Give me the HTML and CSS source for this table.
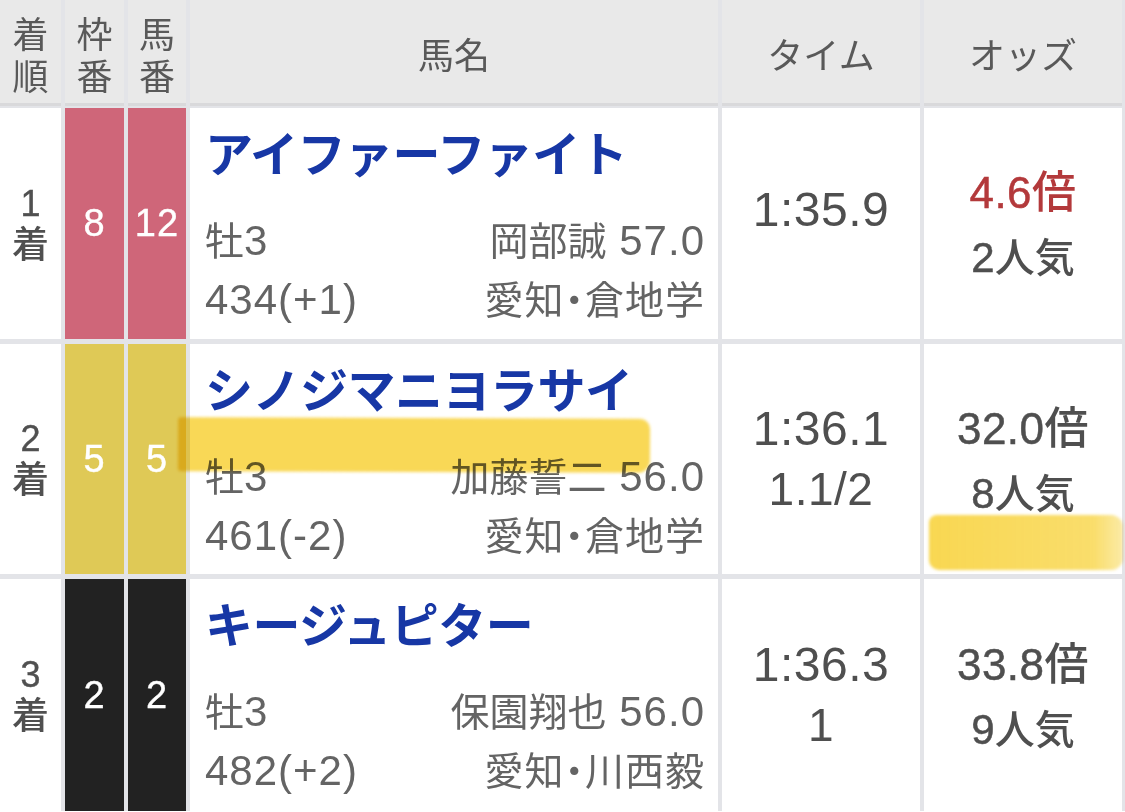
FILE: index.html
```html
<!DOCTYPE html>
<html lang="ja">
<head>
<meta charset="utf-8">
<title>レース結果</title>
<link rel="stylesheet" href="styles.css">
</head>
<body>
<div class="result">
  <div class="th th-stack"><span>着</span><span>順</span></div>
  <div class="th th-stack"><span>枠</span><span>番</span></div>
  <div class="th th-stack"><span>馬</span><span>番</span></div>
  <div class="th">馬名</div>
  <div class="th">タイム</div>
  <div class="th">オッズ</div>

  <div class="td rank"><span class="rk-num">1</span><span class="rk-jp">着</span></div>
  <div class="td frame f-pink">8</div>
  <div class="td frame f-pink">12</div>
  <div class="td horse">
    <div class="name">アイファーファイト</div>
    <div class="info"><span><span class="jp">牡</span>3</span><span><span class="jp">岡部誠</span> 57.0</span></div>
    <div class="info"><span>434(+1)</span><span class="jp stable">愛知・倉地学</span></div>
  </div>
  <div class="td time"><div class="t-main">1:35.9</div><div class="t-margin"></div></div>
  <div class="td odds"><div class="o-main fav">4.6<span class="jp">倍</span></div><div class="o-pop">2<span class="jp">人気</span></div></div>

  <div class="td rank"><span class="rk-num">2</span><span class="rk-jp">着</span></div>
  <div class="td frame f-yellow">5</div>
  <div class="td frame f-yellow">5</div>
  <div class="td horse">
    <div class="name">シノジマニヨラサイ</div>
    <div class="info"><span><span class="jp">牡</span>3</span><span><span class="jp">加藤誓二</span> 56.0</span></div>
    <div class="info"><span>461(-2)</span><span class="jp stable">愛知・倉地学</span></div>
  </div>
  <div class="td time"><div class="t-main">1:36.1</div><div class="t-margin">1.1/2</div></div>
  <div class="td odds"><div class="o-main">32.0<span class="jp">倍</span></div><div class="o-pop">8<span class="jp">人気</span></div></div>

  <div class="td rank"><span class="rk-num">3</span><span class="rk-jp">着</span></div>
  <div class="td frame f-black">2</div>
  <div class="td frame f-black">2</div>
  <div class="td horse">
    <div class="name">キージュピター</div>
    <div class="info"><span><span class="jp">牡</span>3</span><span><span class="jp">保園翔也</span> 56.0</span></div>
    <div class="info"><span>482(+2)</span><span class="jp stable">愛知・川西毅</span></div>
  </div>
  <div class="td time"><div class="t-main">1:36.3</div><div class="t-margin">1</div></div>
  <div class="td odds"><div class="o-main">33.8<span class="jp">倍</span></div><div class="o-pop">9<span class="jp">人気</span></div></div>

  <div class="marker marker-a"></div>
  <div class="marker marker-b"></div>
</div>
</body>
</html>
```
FILE: styles.css
```css
* { box-sizing: border-box; }
html, body { margin: 0; padding: 0; background: #ffffff; }
body {
  font-family: "Liberation Sans", "Noto Sans CJK JP", sans-serif;
  color: #555555;
  overflow: hidden;
}
.jp { font-family: "Noto Sans CJK JP", sans-serif; }
.result {
  position: relative;
  display: grid;
  grid-template-columns: 61px 59px 58px 528px 198px 198px;
  grid-template-rows: 103px 231px 230px 232px;
  column-gap: 4px;
  row-gap: 5px;
  padding-right: 3px;
  width: 1125px;
  background: #e3e4e8;
}
.th {
  background: #e9e9e9;
  box-shadow: 0 3px 0 #d9d9db;
  display: flex;
  align-items: center;
  justify-content: center;
  font-family: "Noto Sans CJK JP", sans-serif;
  font-size: 36px;
  font-weight: 400;
  color: #595959;
  padding-top: 2px;
}
.th-stack {
  flex-direction: column;
  line-height: 42px;
}
.td {
  background: #ffffff;
}
.rank {
  display: flex;
  flex-direction: column;
  align-items: center;
  justify-content: center;
  color: #505050;
}
.rk-num {
  font-size: 36px;
  line-height: 36px;
  -webkit-text-stroke: 0.4px #505050;
}
.rk-jp {
  font-family: "Noto Sans CJK JP", sans-serif;
  font-size: 37px;
  line-height: 40px;
  font-weight: 500;
}
.frame {
  display: flex;
  align-items: center;
  justify-content: center;
  color: #ffffff;
  font-size: 38px;
  letter-spacing: 1px;
  -webkit-text-stroke: 0.4px #ffffff;
}
.f-pink { background: #cf6679; }
.f-yellow { background: #dfc956; }
.f-black { background: #222222; }
.horse {
  padding: 15px 13px 15px 15px;
}
.name {
  font-family: "Noto Sans CJK JP", sans-serif;
  font-size: 48px;
  font-weight: 700;
  line-height: 56px;
  color: #1737a5;
  white-space: nowrap;
  letter-spacing: -0.5px;
}
.info {
  display: flex;
  justify-content: space-between;
  align-items: baseline;
  font-size: 42px;
  line-height: 56px;
  color: #646464;
  letter-spacing: 1px;
  white-space: nowrap;
}
.info .jp {
  font-size: 39px;
  letter-spacing: 0;
}
.info .stable {
  font-feature-settings: "palt" 1;
  letter-spacing: 1px;
}
.name + .info { margin-top: 31px; }
.time, .odds {
  display: flex;
  flex-direction: column;
  align-items: center;
  justify-content: center;
  color: #4f4f4f;
}
.t-main {
  font-size: 48px;
  line-height: 60px;
  letter-spacing: 0.5px;
}
.t-margin {
  font-size: 46px;
  line-height: 60px;
  min-height: 28px;
  letter-spacing: 0.5px;
}
.o-main {
  font-size: 44px;
  line-height: 62px;
  letter-spacing: 0.5px;
  -webkit-text-stroke: 0.5px #4f4f4f;
}
.o-main .jp { font-weight: 500; -webkit-text-stroke: 0; }
.o-main.fav { color: #b3393b; -webkit-text-stroke: 0.5px #b3393b; }
.o-pop {
  font-size: 42px;
  line-height: 62px;
  -webkit-text-stroke: 0.5px #4f4f4f;
}
.o-pop .jp { font-weight: 500; font-size: 40px; -webkit-text-stroke: 0; }
.marker {
  position: absolute;
  background: rgba(247, 205, 38, 0.78);
  mix-blend-mode: multiply;
  filter: blur(1.5px);
  pointer-events: none;
}
.marker-a {
  left: 178px;
  top: 418px;
  width: 472px;
  height: 54px;
  border-radius: 3px 10px 12px 3px;
  transform: rotate(0.2deg);
}
.marker-b {
  left: 929px;
  top: 515px;
  width: 194px;
  height: 55px;
  border-radius: 8px 12px 12px 10px;
  background: linear-gradient(90deg, rgba(247, 205, 38, 0.8) 0%, rgba(247, 208, 50, 0.72) 85%, rgba(247, 215, 80, 0.5) 100%);
}
```
